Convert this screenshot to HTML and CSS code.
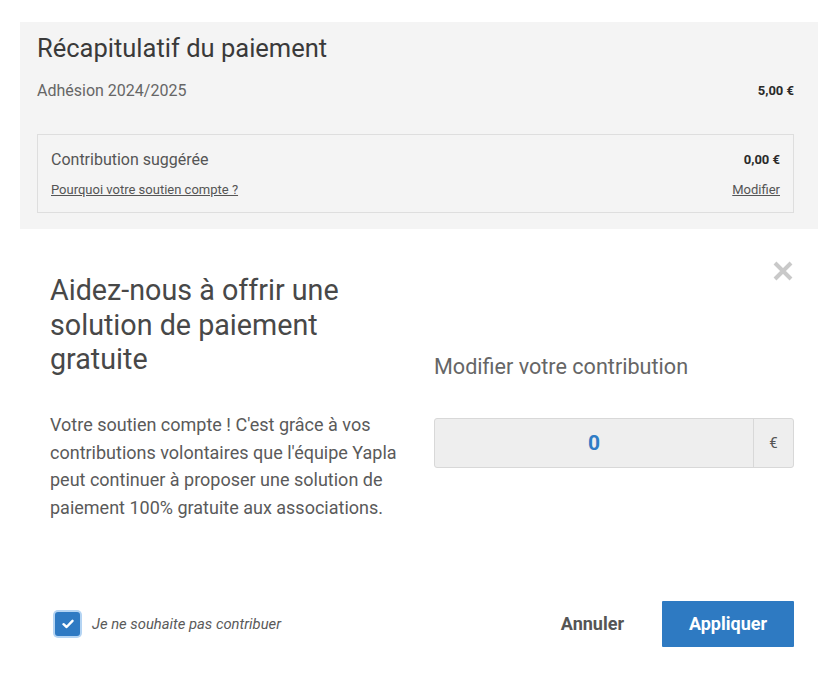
FILE: index.html
```html
<!DOCTYPE html>
<html lang="fr">
<head>
<meta charset="utf-8">
<title>Récapitulatif du paiement</title>
<link rel="stylesheet" href="styles.css">
</head>
<body>
<section class="summary">
  <h1 class="summary-title">Récapitulatif du paiement</h1>
  <div class="summary-row main-row">
    <span class="summary-label">Adhésion 2024/2025</span>
    <span class="summary-amount">5,00 €</span>
  </div>
  <div class="contrib-box">
    <div class="summary-row contrib-row">
      <span class="contrib-label">Contribution suggérée</span>
      <span class="summary-amount">0,00 €</span>
    </div>
    <div class="summary-row links">
      <a class="link" href="#">Pourquoi votre soutien compte ?</a>
      <a class="link" href="#">Modifier</a>
    </div>
  </div>
</section>

<section class="modal">
  <button class="close" aria-label="Fermer">
    <svg width="22" height="22" viewBox="0 0 22 22"><path d="M3 3 L19 19 M19 3 L3 19" stroke="#c9c9c9" stroke-width="4" stroke-linecap="butt"/></svg>
  </button>
  <div class="modal-grid">
    <div class="modal-left">
      <h2 class="modal-title">Aidez-nous à offrir une solution de paiement gratuite</h2>
      <p class="modal-text">Votre soutien compte ! C'est grâce à vos contributions volontaires que l'équipe Yapla peut continuer à proposer une solution de paiement 100% gratuite aux associations.</p>
    </div>
    <div class="modal-right">
      <h3 class="field-title">Modifier votre contribution</h3>
      <div class="input-group">
        <div class="input-value">0</div>
        <div class="input-addon">€</div>
      </div>
    </div>
  </div>
  <div class="modal-footer">
    <label class="check">
      <span class="check-box">
        <svg width="12" height="10" viewBox="0 0 12 10"><path d="M1.5 5.2 L4.6 8 L10.5 1.8" fill="none" stroke="#fff" stroke-width="2.4" stroke-linecap="round" stroke-linejoin="round"/></svg>
      </span>
      <span class="check-label">Je ne souhaite pas contribuer</span>
    </label>
    <div class="actions">
      <button class="btn-cancel">Annuler</button>
      <button class="btn-apply">Appliquer</button>
    </div>
  </div>
</section>
</body>
</html>
```

FILE: styles.css
```css
* { box-sizing: border-box; }
body {
  margin: 0;
  background: #fff;
  font-family: Roboto, "Liberation Sans", Arial, sans-serif;
  color: #333;
}
.summary {
  margin: 22px 10px 0 20px;
  background: #f4f4f4;
  padding: 10px 24px 16px 17px;
}
.summary-title {
  margin: 0;
  font-size: 25.5px;
  font-weight: 400;
  line-height: 32px;
  color: #3a3a3a;
}
.summary-row {
  display: flex;
  justify-content: space-between;
  align-items: center;
}
.main-row {
  margin-top: 15px;
  height: 22px;
}
.summary-label {
  font-size: 16px;
  color: #666;
}
.summary-amount {
  font-size: 13px;
  font-weight: 700;
  color: #2a2a2a;
}
.contrib-box {
  margin-top: 33px;
  border: 1px solid #dedede;
  padding: 13px 13px 14px 13px;
}
.contrib-row { height: 22px; }
.contrib-label {
  font-size: 16px;
  color: #555;
}
.links {
  margin-top: 10px;
  height: 18px;
}
.link {
  font-size: 13px;
  color: #555;
  text-decoration: underline;
}
.modal {
  position: relative;
  padding: 44px 34px 30px 50px;
}
.close {
  position: absolute;
  top: 31px;
  right: 34px;
  border: 0;
  background: none;
  padding: 0;
  width: 22px;
  height: 22px;
}
.modal-grid {
  display: grid;
  grid-template-columns: 352px 1fr;
  column-gap: 32px;
}
.modal-title {
  margin: 0;
  font-size: 28.7px;
  font-weight: 400;
  line-height: 34.5px;
  color: #484848;
}
.modal-text {
  margin: 34.5px 0 0;
  font-size: 18px;
  line-height: 27.7px;
  color: #5a5a5a;
}
.field-title {
  margin: 81px 0 0;
  font-size: 21.6px;
  font-weight: 400;
  line-height: 26px;
  color: #666;
}
.input-group {
  margin-top: 38px;
  display: flex;
  height: 50px;
  border: 1px solid #d8d8d8;
  border-radius: 3px;
  background: #eee;
}
.input-value {
  flex: 1;
  display: flex;
  align-items: center;
  justify-content: center;
  font-size: 21px;
  font-weight: 700;
  color: #2f7cc5;
}
.input-addon {
  width: 40px;
  border-left: 1px solid #d8d8d8;
  display: flex;
  align-items: center;
  justify-content: center;
  font-size: 15px;
  color: #555;
}
.modal-footer {
  margin-top: 79px;
  display: flex;
  justify-content: space-between;
  align-items: center;
}
.check {
  display: flex;
  align-items: center;
  margin-left: 5px;
}
.check-box {
  width: 25px;
  height: 24px;
  border-radius: 3px;
  background: #2f7ac3;
  box-shadow: 0 0 0 2px #b4d4f3;
  display: flex;
  align-items: center;
  justify-content: center;
}
.check-label {
  margin-left: 12px;
  font-size: 14.8px;
  font-style: italic;
  color: #5a5a5a;
}
.actions {
  display: flex;
  align-items: center;
}
.btn-cancel {
  border: 0;
  background: none;
  font-family: inherit;
  font-size: 18px;
  font-weight: 700;
  color: #555;
  padding: 0;
  margin-right: 38px;
}
.btn-apply {
  border: 0;
  background: #2e7ac2;
  color: #fff;
  font-family: inherit;
  font-size: 18px;
  font-weight: 700;
  height: 46px;
  width: 132px;
  border-radius: 1px;
}
```
